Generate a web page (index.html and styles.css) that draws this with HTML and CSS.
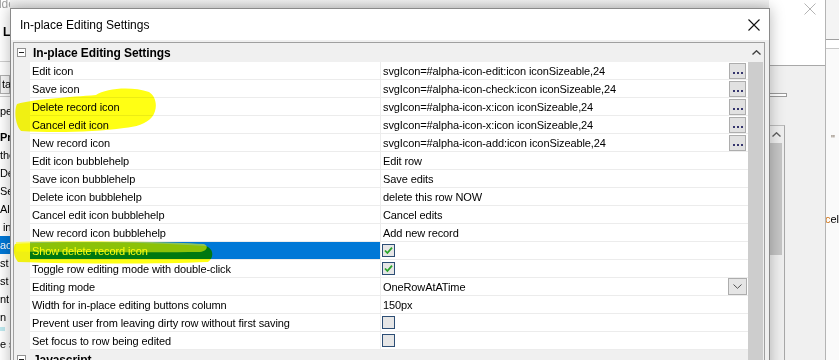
FILE: index.html
```html
<!DOCTYPE html>
<html lang="en">
<head>
  <meta charset="UTF-8">
  <title>In-place Editing Settings</title>
  <link rel="stylesheet" href="styles.css">
</head>
<body>
  <div class="desk">
    <div class="bg-left">
      <div class="bl-title">Builder</div>
      <div class="bl-head">Li</div>
      <div class="bl-tab">ta</div>
      <div class="bl-pe">pe</div>
      <div class="bl-item bold">Pr</div>
      <div class="bl-item">the</div>
      <div class="bl-item">De</div>
      <div class="bl-item">Sea</div>
      <div class="bl-item">Alp</div>
      <div class="bl-item indent">in</div>
      <div class="bl-item sel">ac</div>
      <div class="bl-item">st</div>
      <div class="bl-item">st</div>
      <div class="bl-item">nt</div>
      <div class="bl-item">n</div>
      <div class="bl-gap"><span class="bl-cyan"></span></div>
      <div class="bl-item">e s</div>
    </div>
    <div class="bg-mid"></div>
    <div class="bg-right">
      <div class="br-a">
        <div class="br-top">
          <svg class="br-x" width="12" height="12" viewBox="0 0 12 12"><path d="M0.5 0.5L11.5 11.5M11.5 0.5L0.5 11.5" stroke="#b4b4b4" stroke-width="1" fill="none"/></svg>
        </div>
        <div class="br-split"></div>
        <div class="br-scroll">
          <div class="br-up"><svg width="9" height="5" viewBox="0 0 9 5"><path d="M0.5 4.5L4.5 0.8L8.5 4.5" stroke="#606060" stroke-width="1.4" fill="none"/></svg></div>
          <div class="br-thumb"></div>
        </div>
      </div>
      <div class="br-b">
        <div class="br-b-top"></div>
        <div class="br-b-band"></div>
        <div class="br-code">
          <div class="q">"</div>
          <div class="cel"><span class="kw">c</span>el</div>
        </div>
      </div>
    </div>
  </div>

  <div class="dialog">
    <div class="dlg-title">
      <span>In-place Editing Settings</span>
      <svg class="dlg-close" width="12" height="12" viewBox="0 0 12 12"><path d="M0.5 0.5L11.5 11.5M11.5 0.5L0.5 11.5" stroke="#111" stroke-width="1.1" fill="none"/></svg>
    </div>
    <div class="dlg-body">
      <div class="grid">
        <div class="grid-main">
          <div class="cat"><span class="toggle"></span><b>In-place Editing Settings</b></div>

          <div class="row">
            <div class="gut"></div>
            <div class="name">Edit icon</div>
            <div class="val"><span class="txt">svgIcon=#alpha-icon-edit:icon iconSizeable,24</span><span class="dots"><i></i><i></i><i></i></span></div>
          </div>
          <div class="row">
            <div class="gut"></div>
            <div class="name">Save icon</div>
            <div class="val"><span class="txt">svgIcon=#alpha-icon-check:icon iconSizeable,24</span><span class="dots"><i></i><i></i><i></i></span></div>
          </div>
          <div class="row">
            <div class="gut"></div>
            <div class="name">Delete record icon</div>
            <div class="val"><span class="txt">svgIcon=#alpha-icon-x:icon iconSizeable,24</span><span class="dots"><i></i><i></i><i></i></span></div>
          </div>
          <div class="row">
            <div class="gut"></div>
            <div class="name">Cancel edit icon</div>
            <div class="val"><span class="txt">svgIcon=#alpha-icon-x:icon iconSizeable,24</span><span class="dots"><i></i><i></i><i></i></span></div>
          </div>
          <div class="row">
            <div class="gut"></div>
            <div class="name">New record icon</div>
            <div class="val"><span class="txt">svgIcon=#alpha-icon-add:icon iconSizeable,24</span><span class="dots"><i></i><i></i><i></i></span></div>
          </div>
          <div class="row">
            <div class="gut"></div>
            <div class="name">Edit icon bubblehelp</div>
            <div class="val"><span class="txt">Edit row</span></div>
          </div>
          <div class="row">
            <div class="gut"></div>
            <div class="name">Save icon bubblehelp</div>
            <div class="val"><span class="txt">Save edits</span></div>
          </div>
          <div class="row">
            <div class="gut"></div>
            <div class="name">Delete icon bubblehelp</div>
            <div class="val"><span class="txt">delete this row NOW</span></div>
          </div>
          <div class="row">
            <div class="gut"></div>
            <div class="name">Cancel edit icon bubblehelp</div>
            <div class="val"><span class="txt">Cancel edits</span></div>
          </div>
          <div class="row">
            <div class="gut"></div>
            <div class="name">New record icon bubblehelp</div>
            <div class="val"><span class="txt">Add new record</span></div>
          </div>
          <div class="row selected">
            <div class="gut"></div>
            <div class="name">Show delete record icon</div>
            <div class="val"><span class="chk"><svg width="11" height="11" viewBox="0 0 11 11"><path d="M2 5.5L4.4 8L9 2.6" stroke="#2aa52a" stroke-width="1.8" fill="none"/></svg></span></div>
          </div>
          <div class="row">
            <div class="gut"></div>
            <div class="name">Toggle row editing mode with double-click</div>
            <div class="val"><span class="chk"><svg width="11" height="11" viewBox="0 0 11 11"><path d="M2 5.5L4.4 8L9 2.6" stroke="#2aa52a" stroke-width="1.8" fill="none"/></svg></span></div>
          </div>
          <div class="row">
            <div class="gut"></div>
            <div class="name">Editing mode</div>
            <div class="val"><span class="txt">OneRowAtATime</span><span class="drop"><svg width="9" height="5" viewBox="0 0 9 5"><path d="M0.5 0.5L4.5 4.3L8.5 0.5" stroke="#505050" stroke-width="1" fill="none"/></svg></span></div>
          </div>
          <div class="row">
            <div class="gut"></div>
            <div class="name">Width for in-place editing buttons column</div>
            <div class="val"><span class="txt">150px</span></div>
          </div>
          <div class="row">
            <div class="gut"></div>
            <div class="name">Prevent user from leaving dirty row without first saving</div>
            <div class="val"><span class="chk"></span></div>
          </div>
          <div class="row">
            <div class="gut"></div>
            <div class="name">Set focus to row being edited</div>
            <div class="val"><span class="chk"></span></div>
          </div>

          <div class="cat"><span class="toggle"></span><b>Javascript</b></div>
        </div>
        <div class="vscroll">
          <div class="vs-up"><svg width="9" height="5" viewBox="0 0 9 5"><path d="M0.5 4.5L4.5 0.8L8.5 4.5" stroke="#404040" stroke-width="1.4" fill="none"/></svg></div>
          <div class="vs-thumb"></div>
        </div>
      </div>
    </div>
  </div>

  <svg class="marker" width="839" height="360" viewBox="0 0 839 360">
    <path d="M17 104 C 35 99, 70 97, 96 95 C 106 88, 132 86, 149 92 C 157 97, 158 109, 152 117 C 146 124, 136 127, 124 128 C 95 132, 55 133, 21 131 C 15 125, 14 110, 17 104 Z" fill="#ffff14"/>
    <path d="M15 244 C 60 241, 150 242, 206 246 C 214 249, 214 258, 208 262 C 160 264, 80 264, 18 262 C 13 256, 13 248, 15 244 Z" fill="#ffff14"/>
  </svg>
  <svg class="marker-wash" width="839" height="360" viewBox="0 0 839 360">
    <path d="M16 242 C 60 240, 150 241, 204 244 C 209 246, 207 251, 200 252 C 150 252.5, 80 252, 16 251.5 Z" fill="#ffff00"/>
  </svg>
</body>
</html>
```

FILE: styles.css
```css
* {
  box-sizing: border-box;
}

body {
  margin: 0;
  width: 839px;
  height: 360px;
  overflow: hidden;
  position: relative;
  background: #f0f0f0;
  font-family: "Liberation Sans", Arial, sans-serif;
  font-size: 11px;
  letter-spacing: -0.1px;
  color: #000;
}

/* background windows */
.desk {
  display: flex;
  height: 360px;
}

.bg-left {
  width: 10px;
  flex-shrink: 0;
  white-space: nowrap;
  background: #fff;
}

.bl-title {
  height: 14px;
  line-height: 8px;
  margin-left: -18px;
  color: #a0a0a0;
  font-size: 12px;
}

.bl-head {
  height: 48px;
  padding: 12px 0 0 3px;
  line-height: 12px;
  font-weight: bold;
  font-size: 12px;
  border-bottom: 1px solid #cfcfcf;
}

.bl-tab {
  margin-top: 13px;
  height: 19px;
  line-height: 17px;
  padding-left: 1px;
  border: 1px solid #b0b0b0;
  background: #f7f7f7;
}

.bl-pe {
  margin-top: 2px;
  height: 32px;
  line-height: 28px;
  border-top: 1px solid #c8c8c8;
}

.bl-item {
  height: 18px;
  line-height: 18px;
}

.bl-item.bold {
  font-weight: bold;
}

.bl-item.indent {
  padding-left: 3px;
}

.bl-item.sel {
  background: #0078d7;
  color: #fff;
}

.bl-gap {
  height: 9px;
  padding-top: 1px;
}

.bl-cyan {
  display: block;
  width: 5px;
  height: 4px;
  background: #bfeaf0;
}

.bg-mid {
  flex: 1;
  background: linear-gradient(#f2f2f2, #e6e6e6 8px);
}

.bg-right {
  width: 70px;
  flex-shrink: 0;
  display: flex;
}

.br-a {
  width: 56px;
  flex-shrink: 0;
  display: flex;
  flex-direction: column;
  background: #f0f0f0;
}

.br-top {
  height: 66px;
  background: #fff;
  border-bottom: 1px solid #a8a8a8;
  display: flex;
  justify-content: flex-end;
  padding: 3px 9px 0 0;
}

.br-split {
  margin-top: 27px;
  width: 18px;
  height: 4px;
  border: 1px solid #9a9a9a;
  border-left: none;
  background: #fff;
}

.br-scroll {
  margin-top: 28px;
  width: 16px;
  flex: 1;
  border-top: 1px solid #bdbdbd;
  border-right: 1px solid #a8a8a8;
  background: #f0f0f0;
}

.br-up {
  height: 17px;
  display: flex;
  justify-content: center;
  align-items: center;
}

.br-thumb {
  margin-left: 1px;
  width: 12px;
  height: 112px;
  background: #c6c6c6;
}

.br-b {
  flex: 1;
  min-width: 0;
  overflow: hidden;
  border-left: 1px solid #b4b4b4;
  background: #fafafa;
}

.br-b-top {
  height: 40px;
  background: #f4f4f4;
  border-bottom: 1px solid #a0a0a0;
}

.br-b-band {
  height: 9px;
  border-bottom: 1px solid #c8c8c8;
  background: #fff;
}

.br-code {
  padding-top: 83px;
  font-size: 11px;
  line-height: 14px;
  white-space: nowrap;
  letter-spacing: 0;
}

.br-code .q {
  padding-left: 5px;
  color: #7a6a5a;
  height: 80px;
}

.br-code .cel {
  margin-left: -1px;
}

.br-code .kw {
  color: #d07010;
}

/* dialog */
.dialog {
  position: absolute;
  left: 10px;
  top: 8px;
  width: 760px;
  height: 380px;
  border: 1px solid #8a8a8a;
  background: #f0f0f0;
  box-shadow: 0 0 14px rgba(0, 0, 0, 0.28);
}

.dlg-title {
  height: 31px;
  background: #fff;
  display: flex;
  align-items: center;
  justify-content: space-between;
  padding: 0 9px 0 9px;
  font-size: 12px;
  letter-spacing: 0;
}

.dlg-body {
  padding: 2px 4px 0 2px;
}

.grid {
  display: flex;
  border: 1px solid #a0a0a0;
  background: #f0f0f0;
  height: 340px;
}

.grid-main {
  width: 734px;
}

.cat {
  height: 19px;
  display: flex;
  align-items: center;
  background: #f0f0f0;
  font-size: 12px;
}

.cat b {
  margin-left: 7px;
}

.toggle {
  position: relative;
  margin-left: 3px;
  width: 9px;
  height: 9px;
  border: 1px solid #919191;
  background: #fff;
}

.toggle::after {
  content: "";
  position: absolute;
  left: 1px;
  top: 3px;
  width: 5px;
  height: 1px;
  background: #222;
}

.row {
  display: flex;
  height: 18px;
}

.gut {
  width: 16px;
  background: #f0f0f0;
}

.name {
  width: 351px;
  padding-left: 2px;
  line-height: 18px;
  background: #fff;
  border-right: 1px solid #ececec;
  border-bottom: 1px solid #ececec;
  white-space: nowrap;
  overflow: hidden;
}

.val {
  width: 367px;
  display: flex;
  align-items: flex-start;
  background: #fff;
  border-bottom: 1px solid #ececec;
}

.txt {
  flex: 1;
  padding-left: 2px;
  line-height: 18px;
  height: 17px;
  white-space: nowrap;
}

.row.selected .name {
  background: #0078d7;
  color: #fff;
}

.dots {
  width: 17px;
  height: 16px;
  margin: 1px 2px 0 0;
  border: 1px solid #adadad;
  background: #e1e1e1;
  display: flex;
  justify-content: center;
  align-items: center;
  gap: 2px;
  padding-top: 3px;
}

.dots i {
  width: 2px;
  height: 2px;
  background: #35356e;
}

.drop {
  width: 19px;
  height: 17px;
  margin-right: 1px;
  border: 1px solid #adadad;
  background: #e5e5e5;
  display: flex;
  justify-content: center;
  align-items: center;
}

.chk {
  width: 13px;
  height: 13px;
  margin: 2px 0 0 1px;
  border: 1px solid #2d4e75;
  background: #e6e6e6;
  display: flex;
  justify-content: center;
  align-items: center;
}

.vscroll {
  width: 16px;
  display: flex;
  flex-direction: column;
}

.vs-up {
  height: 19px;
  display: flex;
  justify-content: center;
  align-items: center;
}

.vs-thumb {
  flex: 1;
  width: 15px;
  background: #cdcdcd;
}

/* highlighter strokes drawn over the screenshot */
.marker,
.marker-wash {
  position: absolute;
  left: 0;
  top: 0;
  pointer-events: none;
}

.marker {
  mix-blend-mode: multiply;
}

.marker-wash {
  opacity: 0.55;
}
```
